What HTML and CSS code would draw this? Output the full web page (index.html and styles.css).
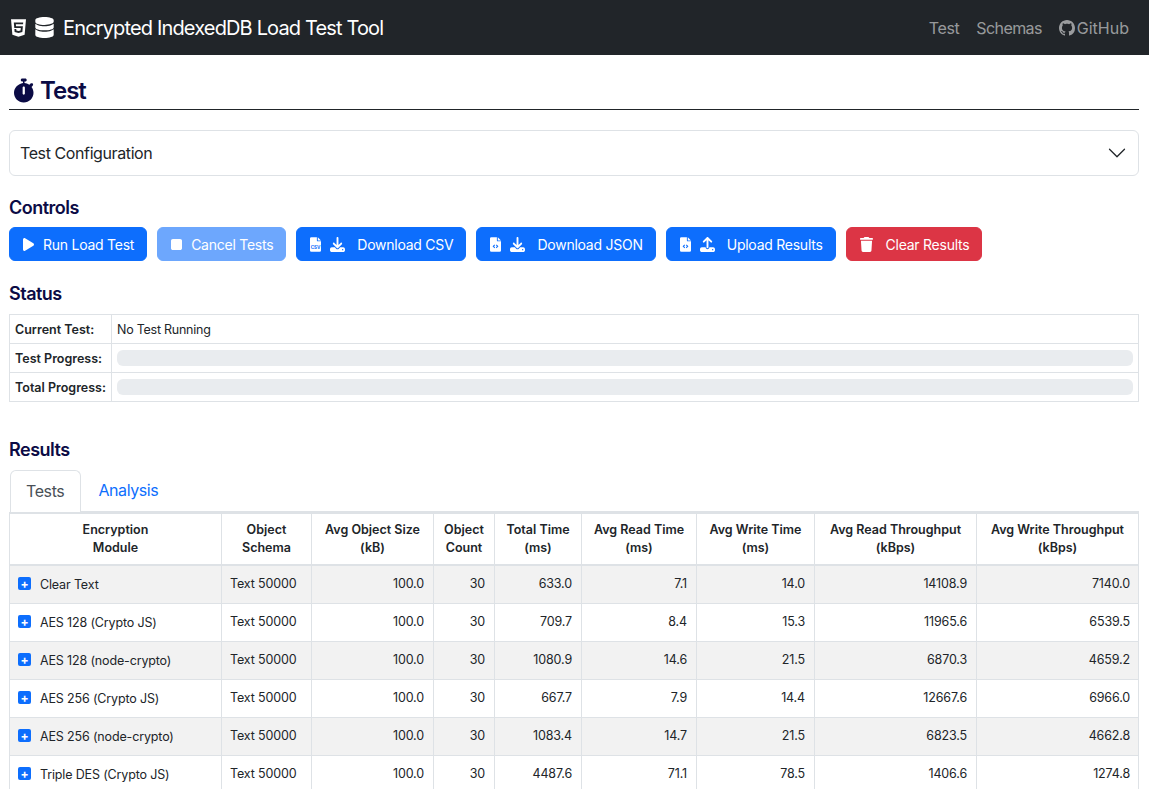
FILE: index.html
```html
<!DOCTYPE html>
<html lang="en">
<head>
	<meta charset="UTF-8">
	<meta name="viewport" content="width=device-width, initial-scale=1.0">
	<title>Encrypted IndexedDB Load Test Tool</title>
	<link rel="stylesheet" href="styles.css">
</head>

<body>
	<nav class="navbar">
		<div class="brand">
			<svg class="brand-html" viewBox="0 0 384 512"><path fill="currentColor" d="M0 32l34.900 395.800L191.500 480l157.600-52.200L384 32H0zm308.200 127.900H124.400l4.100 49.400h175.600l-13.600 148.400-97.900 27v.3h-1.100l-98.700-27.300-6-75.800h47.700L138 320l53.500 14.500 53.700-14.500 6-62.200H84.300L71.500 112.200h241.100l-4.400 47.700z"/></svg>
			<svg class="brand-db" viewBox="0 0 448 512"><path fill="currentColor" d="M448 73.100v45.700C448 159.100 347.700 192 224 192S0 159.100 0 118.900V73.100C0 32.900 100.300 0 224 0s224 32.900 224 73.100zM382.800 201c24.700-8.900 47.400-20.300 65.200-34.400v86.400C448 293.200 347.700 326 224 326S0 293.200 0 253v-86.400c17.800 14.100 40.500 25.500 65.200 34.400C110.400 217.300 165.300 224 224 224s113.600-6.700 158.800-23zM65.200 335c45.200 16.300 100.100 23 158.800 23s113.600-6.700 158.800-23c24.700-8.900 47.400-20.300 65.200-34.400v138.300C448 479.100 347.700 512 224 512S0 479.100 0 438.900V300.600c17.800 14.100 40.500 25.500 65.200 34.400z"/></svg>
			<span>Encrypted IndexedDB Load Test Tool</span>
		</div>
		<ul class="nav-links">
			<li>Test</li>
			<li class="schemas">Schemas</li>
			<li class="github"><svg viewBox="0 0 16 16"><path fill="currentColor" d="M8 0C3.58 0 0 3.58 0 8c0 3.54 2.29 6.53 5.47 7.59.4.07.55-.17.55-.38 0-.19-.01-.82-.01-1.49-2.01.37-2.53-.49-2.69-.94-.09-.23-.48-.94-.82-1.13-.28-.15-.68-.52-.01-.53.63-.01 1.08.58 1.23.82.72 1.21 1.87.87 2.33.66.07-.52.28-.87.51-1.07-1.78-.2-3.64-.89-3.64-3.95 0-.87.31-1.59.82-2.15-.08-.2-.36-1.02.08-2.12 0 0 .67-.21 2.2.82.64-.18 1.32-.27 2-.27.68 0 1.36.09 2 .27 1.53-1.04 2.2-.82 2.2-.82.44 1.1.16 1.92.08 2.12.51.56.82 1.27.82 2.15 0 3.07-1.87 3.75-3.65 3.95.29.25.54.73.54 1.48 0 1.07-.01 1.93-.01 2.2 0 .21.15.46.55.38A8.013 8.013 0 0016 8c0-4.42-3.58-8-8-8z"/></svg>GitHub</li>
		</ul>
	</nav>

	<main class="page">
		<h1 class="page-title">
			<svg viewBox="0 0 448 512"><path fill="currentColor" d="M176 0c-17.700 0-32 14.300-32 32s14.300 32 32 32h16v34.400C86.500 113.900 0 204.800 0 304c0 114.900 93.100 208 208 208s208-93.100 208-208c0-47-15.600-90.400-41.900-125.200l24.500-24.500c12.500-12.500 12.500-32.800 0-45.300s-32.800-12.500-45.300 0l-25.400 25.400C292.700 113.400 258 100.800 224 98.400V64h16c17.700 0 32-14.300 32-32s-14.300-32-32-32H176zm56 192v128c0 13.300-10.700 24-24 24s-24-10.700-24-24V192c0-13.300 10.700-24 24-24s24 10.700 24 24z"/></svg>
			Test
		</h1>

		<div class="accordion">
			<span>Test Configuration</span>
			<svg viewBox="0 0 16 16"><path fill="currentColor" fill-rule="evenodd" d="M1.646 4.646a.5.5 0 0 1 .708 0L8 10.293l5.646-5.647a.5.5 0 0 1 .708.708l-6 6a.5.5 0 0 1-.708 0l-6-6a.5.5 0 0 1 0-.708z"/></svg>
		</div>

		<h2 class="section-title">Controls</h2>
		<div class="controls">
			<button class="btn" type="button"><svg class="ic" viewBox="0 0 384 512"><path fill="currentColor" d="M73 39c-14.800-9.100-33.400-9.400-48.500-.9S0 62.600 0 80V432c0 17.400 9.400 33.400 24.500 41.900s33.700 8.100 48.500-.9L361 297c14.300-8.700 23-24.200 23-41s-8.700-32.200-23-41L73 39z"/></svg>Run Load Test</button>
			<button class="btn btn-off" type="button"><svg class="ic" viewBox="0 0 384 512"><path fill="currentColor" d="M0 128C0 92.700 28.700 64 64 64H320c35.300 0 64 28.700 64 64V384c0 35.300-28.700 64-64 64H64c-35.300 0-64-28.700-64-64V128z"/></svg>Cancel Tests</button>
			<button class="btn" type="button">
				<svg class="ic" viewBox="0 0 12 16"><path fill="currentColor" d="M1.500 0H7.500V3.500A1 1 0 0 0 8.500 4.500H12V14.500A1.500 1.500 0 0 1 10.500 16H1.500A1.500 1.500 0 0 1 0 14.500V1.500A1.500 1.500 0 0 1 1.500 0zM8.500 0L12 3.500H8.500z"/><text class="ic-csv" x="6" y="12.500" text-anchor="middle">CSV</text></svg>
				<svg class="ic ic-wide" viewBox="0 0 512 512"><path fill="currentColor" d="M288 32c0-17.700-14.300-32-32-32s-32 14.300-32 32V274.700l-73.400-73.400c-12.500-12.500-32.800-12.500-45.300 0s-12.500 32.800 0 45.300l128 128c12.500 12.500 32.800 12.500 45.300 0l128-128c12.500-12.500 12.500-32.800 0-45.300s-32.800-12.500-45.300 0L288 274.700V32zM64 352c-35.300 0-64 28.700-64 64v32c0 35.300 28.700 64 64 64H448c35.300 0 64-28.700 64-64V416c0-35.300-28.700-64-64-64H346.500l-45.300 45.300c-25 25-65.500 25-90.500 0L165.500 352H64zm368 56a24 24 0 1 1 0 48 24 24 0 1 1 0-48z"/></svg>
				Download CSV</button>
			<button class="btn" type="button">
				<svg class="ic" viewBox="0 0 12 16"><path fill="currentColor" fill-rule="evenodd" d="M1.500 0H7.500V3.500A1 1 0 0 0 8.500 4.500H12V14.500A1.500 1.500 0 0 1 10.500 16H1.500A1.500 1.500 0 0 1 0 14.500V1.500A1.500 1.500 0 0 1 1.500 0zM8.500 0L12 3.500H8.500zM4.800 8L2.800 10l2 2 .8-.8L4.400 10l1.200-1.200zM7.200 8l-.8.8L7.600 10l-1.200 1.200.8.8 2-2z"/></svg>
				<svg class="ic ic-wide" viewBox="0 0 512 512"><path fill="currentColor" d="M288 32c0-17.700-14.300-32-32-32s-32 14.300-32 32V274.700l-73.400-73.400c-12.500-12.500-32.800-12.500-45.300 0s-12.500 32.800 0 45.300l128 128c12.500 12.500 32.800 12.500 45.300 0l128-128c12.500-12.500 12.500-32.800 0-45.300s-32.800-12.500-45.300 0L288 274.700V32zM64 352c-35.300 0-64 28.700-64 64v32c0 35.300 28.700 64 64 64H448c35.300 0 64-28.700 64-64V416c0-35.300-28.700-64-64-64H346.500l-45.300 45.300c-25 25-65.500 25-90.500 0L165.500 352H64zm368 56a24 24 0 1 1 0 48 24 24 0 1 1 0-48z"/></svg>
				Download JSON</button>
			<button class="btn" type="button">
				<svg class="ic" viewBox="0 0 12 16"><path fill="currentColor" fill-rule="evenodd" d="M1.500 0H7.500V3.500A1 1 0 0 0 8.500 4.500H12V14.500A1.500 1.500 0 0 1 10.500 16H1.500A1.500 1.500 0 0 1 0 14.500V1.500A1.500 1.500 0 0 1 1.500 0zM8.500 0L12 3.500H8.500zM4.800 8L2.800 10l2 2 .8-.8L4.400 10l1.200-1.200zM7.200 8l-.8.8L7.600 10l-1.200 1.200.8.8 2-2z"/></svg>
				<svg class="ic ic-wide" viewBox="0 0 512 512"><path fill="currentColor" d="M288 109.300V352c0 17.700-14.300 32-32 32s-32-14.300-32-32V109.300l-73.400 73.400c-12.500 12.500-32.800 12.500-45.300 0s-12.500-32.800 0-45.300l128-128c12.500-12.500 32.800-12.500 45.300 0l128 128c12.500 12.500 12.500 32.800 0 45.300s-32.800 12.500-45.300 0L288 109.300zM64 352H192c0 35.300 28.700 64 64 64s64-28.700 64-64H448c35.300 0 64 28.700 64 64v32c0 35.300-28.700 64-64 64H64c-35.300 0-64-28.700-64-64V416c0-35.300 28.700-64 64-64zm368 56a24 24 0 1 0 0 48 24 24 0 1 0 0-48z"/></svg>
				Upload Results</button>
			<button class="btn btn-danger" type="button"><svg class="ic ic-trash" viewBox="0 0 448 512"><path fill="currentColor" d="M135.200 17.700L128 32H32C14.300 32 0 46.300 0 64S14.300 96 32 96H416c17.700 0 32-14.300 32-32s-14.300-32-32-32H320l-7.200-14.300C307.400 6.800 296.300 0 284.200 0H163.800c-12.100 0-23.200 6.800-28.600 17.700zM416 128H32L53.200 467c1.600 25.300 22.600 45 47.900 45H346.900c25.300 0 46.300-19.700 47.900-45L416 128z"/></svg>Clear Results</button>
		</div>

		<h2 class="section-title status-title">Status</h2>
		<table class="status">
			<tr><th>Current Test:</th><td>No Test Running</td></tr>
			<tr><th>Test Progress:</th><td><div class="progress"></div></td></tr>
			<tr><th>Total Progress:</th><td><div class="progress"></div></td></tr>
		</table>

		<h2 class="section-title results-title">Results</h2>
		<div class="tabs">
			<div class="tab tab-active">Tests</div>
			<div class="tab">Analysis</div>
		</div>
		<table class="results">
			<colgroup>
				<col class="c-module"><col class="c-schema"><col class="c-size"><col class="c-count"><col class="c-total">
				<col class="c-read"><col class="c-write"><col class="c-rthru"><col class="c-wthru">
			</colgroup>
			<thead>
				<tr>
					<th>Encryption<br>Module</th><th>Object<br>Schema</th><th>Avg Object Size<br>(kB)</th><th>Object<br>Count</th>
					<th>Total Time<br>(ms)</th><th>Avg Read Time<br>(ms)</th><th>Avg Write Time<br>(ms)</th>
					<th>Avg Read Throughput<br>(kBps)</th><th>Avg Write Throughput<br>(kBps)</th>
				</tr>
			</thead>
			<tbody>
				<tr class="odd"><td class="module"><span class="plus">+</span>Clear Text</td><td>Text 50000</td><td>100.0</td><td>30</td><td>633.0</td><td>7.1</td><td>14.0</td><td>14108.9</td><td>7140.0</td></tr>
				<tr><td class="module"><span class="plus">+</span>AES 128 (Crypto JS)</td><td>Text 50000</td><td>100.0</td><td>30</td><td>709.7</td><td>8.4</td><td>15.3</td><td>11965.6</td><td>6539.5</td></tr>
				<tr class="odd"><td class="module"><span class="plus">+</span>AES 128 (node-crypto)</td><td>Text 50000</td><td>100.0</td><td>30</td><td>1080.9</td><td>14.6</td><td>21.5</td><td>6870.3</td><td>4659.2</td></tr>
				<tr><td class="module"><span class="plus">+</span>AES 256 (Crypto JS)</td><td>Text 50000</td><td>100.0</td><td>30</td><td>667.7</td><td>7.9</td><td>14.4</td><td>12667.6</td><td>6966.0</td></tr>
				<tr class="odd"><td class="module"><span class="plus">+</span>AES 256 (node-crypto)</td><td>Text 50000</td><td>100.0</td><td>30</td><td>1083.4</td><td>14.7</td><td>21.5</td><td>6823.5</td><td>4662.8</td></tr>
				<tr><td class="module"><span class="plus">+</span>Triple DES (Crypto JS)</td><td>Text 50000</td><td>100.0</td><td>30</td><td>4487.6</td><td>71.1</td><td>78.5</td><td>1406.6</td><td>1274.8</td></tr>
			</tbody>
		</table>
	</main>
</body>

</html>
```

FILE: styles.css
```css
html, body {
	height: 100%;
	overflow: hidden;
}

body {
	margin: 0;
	font-family: Inter, "Liberation Sans", sans-serif;
	font-size: 16px;
	color: #212529;
	background-color: #fff;
}

svg {display: block;}

.navbar {
	display: flex;
	align-items: center;
	justify-content: space-between;
	height: 55px;
	padding: 0 20px 0 11px;
	background-color: #212529;
}
.brand {display: flex; align-items: center; color: #fff; font-size: 20px; letter-spacing: -0.85px;}
.brand-html {width: 15px; height: 20px; margin-right: 9px;}
.brand-db {width: 19px; height: 21px; margin-right: 9px;}
.nav-links {display: flex; gap: 17px; list-style-type: none; margin: 0; padding: 0; color: rgba(255, 255, 255, 0.55); letter-spacing: -0.4px;}
.schemas {letter-spacing: -0.6px;}
.github {display: flex; align-items: center; gap: 2px; letter-spacing: 0;}
.github svg {width: 16px; height: 16px;}

.page {padding: 0 10px 0 9px;}

.page-title {
	display: flex;
	align-items: center;
	gap: 5px;
	height: 55px;
	margin: 0 0 20px;
	padding: 16px 0 0 5px;
	border-bottom: 1px solid #212529;
	color: #0b0b45;
	font-size: 24px;
	font-weight: 600;
	letter-spacing: -1px;
	box-sizing: border-box;
}
.page-title svg {width: 21px; height: 25px;}

.accordion {
	display: flex;
	align-items: center;
	justify-content: space-between;
	height: 46px;
	padding: 0 11px 0 10px;
	border: 1px solid #dee2e6;
	border-radius: 6px;
	letter-spacing: -0.4px;
	box-sizing: border-box;
}
.accordion svg {width: 20px; height: 20px;}

.section-title {
	margin: 21px 0 8px;
	color: #0b0b45;
	font-size: 18px;
	line-height: 22px;
	font-weight: 600;
	letter-spacing: -0.5px;
}
.status-title {margin: 22px 0 9px;}
.results-title {margin: 37px 0 9px;}

.controls {display: flex; gap: 10px;}
.btn {
	display: flex;
	align-items: center;
	height: 34px;
	padding: 0 12px 0 13px;
	border: 1px solid #0d6efd;
	border-radius: 6px;
	background-color: #0d6efd;
	color: #fff;
	font: inherit;
	font-size: 14px;
	letter-spacing: -0.25px;
}
.btn-off {opacity: 0.6;}
.btn-danger {background-color: #dc3545; border-color: #dc3545;}
.ic {width: 11px; height: 15px; margin-right: 9px; flex: none;}
.ic-wide {width: 15px; margin-right: 12px;}
.ic-trash {width: 13px; margin-right: 13px;}
.ic-csv {fill: #0d6efd; font-size: 5px; font-weight: 700; letter-spacing: -0.2px;}

table {border-collapse: collapse; width: 100%; font-size: 12.5px;}
th, td {border: 1px solid #dee2e6;}

.status th {width: 91px; padding: 0 5px; text-align: left; white-space: nowrap; font-weight: 600;}
.status td {padding: 0 5px; height: 28px; letter-spacing: -0.25px;}
.progress {height: 16px; border-radius: 6px; background-color: #e9ecef;}

.tabs {display: flex; gap: 1px; height: 41px; margin-left: 1px; border-bottom: 1px solid #dee2e6; letter-spacing: -0.4px;}
.tab {padding: 0 16px; line-height: 41px; color: #0d6efd; font-size: 16px;}
.tab-active {
	height: 42px;
	padding-left: 15px;
	color: #495057;
	background-color: #fff;
	border: 1px solid #dee2e6;
	border-bottom: 0;
	border-radius: 6px 6px 0 0;
	box-sizing: border-box;
}

.results {table-layout: fixed; border-top: 2px solid #dee2e6;}
.results th {height: 50px; padding: 0 9px; text-align: center; line-height: 18px; font-weight: 600; border-bottom-width: 2px;}
.results td {height: 38px; padding: 9px 9px 0 8px; text-align: right; vertical-align: top; line-height: 18px; box-sizing: border-box; letter-spacing: -0.15px;}
.results td:last-child {padding-right: 8px;}
.results td:nth-child(2) {text-align: left;}
.results .module {text-align: left; padding-top: 10px;}
.odd td {background-color: #f2f2f2;}
.plus {
	display: inline-block;
	width: 13px;
	height: 13px;
	margin-right: 9px;
	border-radius: 2px;
	background-color: #0d6efd;
	color: #fff;
	font-size: 12px;
	font-weight: 700;
	line-height: 13px;
	text-align: center;
	vertical-align: 1px;
}

.c-module {width: 212px;}
.c-schema {width: 90px;}
.c-size {width: 122px;}
.c-count {width: 61px;}
.c-total {width: 87px;}
.c-read {width: 115px;}
.c-write {width: 118px;}
.c-rthru {width: 162px;}
.c-wthru {width: 162px;}
```
